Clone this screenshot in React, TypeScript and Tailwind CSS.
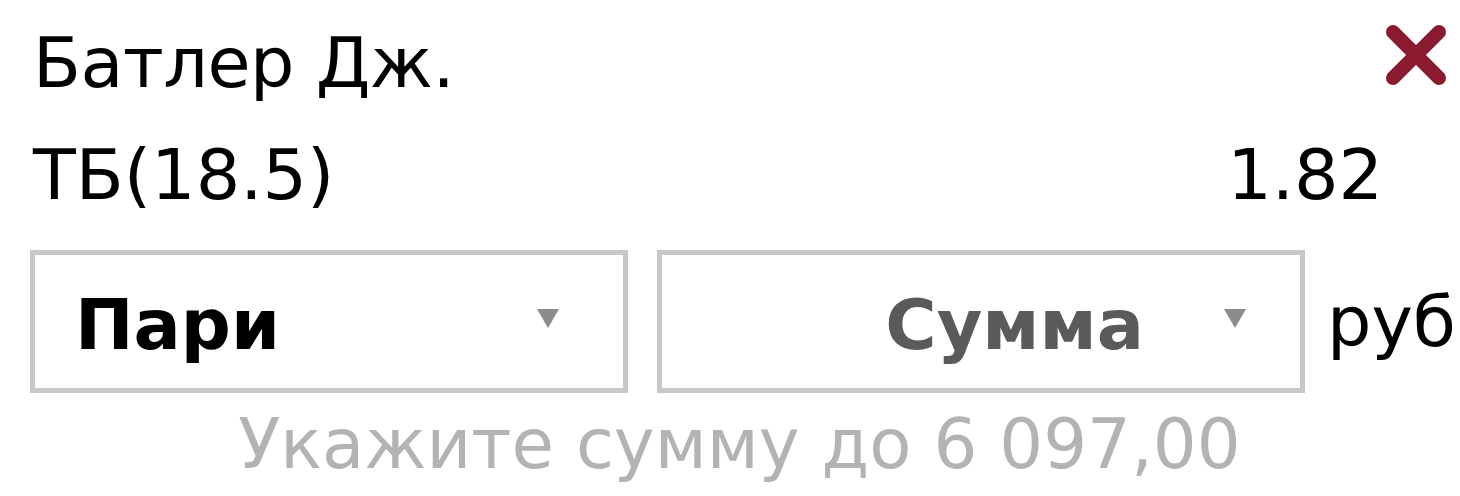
const font = { fontFamily: '"DejaVu Sans", Verdana, sans-serif' };

function Arrow() {
  return (
    <svg width="26" height="24" viewBox="0 0 26 24" className="shrink-0 -mt-[14px]">
      <path d="M2 3 L24 3 L13 22 Z" fill="#8c8c8c" />
    </svg>
  );
}

export default function App() {
  return (
    <div
      className="w-[1460px] h-[496px] bg-white text-black pl-[33px] pr-[10px] pt-[7px] text-[70px] leading-[112px]"
      style={font}
    >
      <div className="flex justify-between items-start">
        <span className="tracking-[-0.5px]">Батлер Дж.</span>
        <svg width="64" height="64" viewBox="0 0 64 64" className="mt-[16px] mr-[2px]">
          <path d="M9 9 L55 55 M55 9 L9 55" stroke="#8a1a2e" strokeWidth="14" strokeLinecap="round" />
        </svg>
      </div>
      <div className="flex justify-between">
        <span>ТБ(18.5)</span>
        <span className="mr-[67px]">1.82</span>
      </div>
      <div className="flex items-center mt-[19px] -ml-[3px] -mr-[10px]">
        <div className="shrink-0 w-[598px] h-[143px] border-[5px] border-[#c8c8c8] flex items-center pl-[40px] pr-[62px] pt-[6px] leading-none">
          <span className="font-bold flex-1">Пари</span>
          <Arrow />
        </div>
        <div className="shrink-0 w-[648px] ml-[29px] h-[143px] border-[5px] border-[#c8c8c8] flex items-center justify-end pr-[52px] pt-[6px] leading-none">
          <span className="font-bold text-[#5a5a5a] mr-[78px]">Сумма</span>
          <Arrow />
        </div>
        <span className="ml-[22px] leading-none whitespace-nowrap">руб</span>
      </div>
      <div className="text-center text-[#b3b3b3] text-[69px] leading-[90px] mt-[6px] pr-[4px]">
        Укажите сумму до 6 097,00
      </div>
    </div>
  );
}
